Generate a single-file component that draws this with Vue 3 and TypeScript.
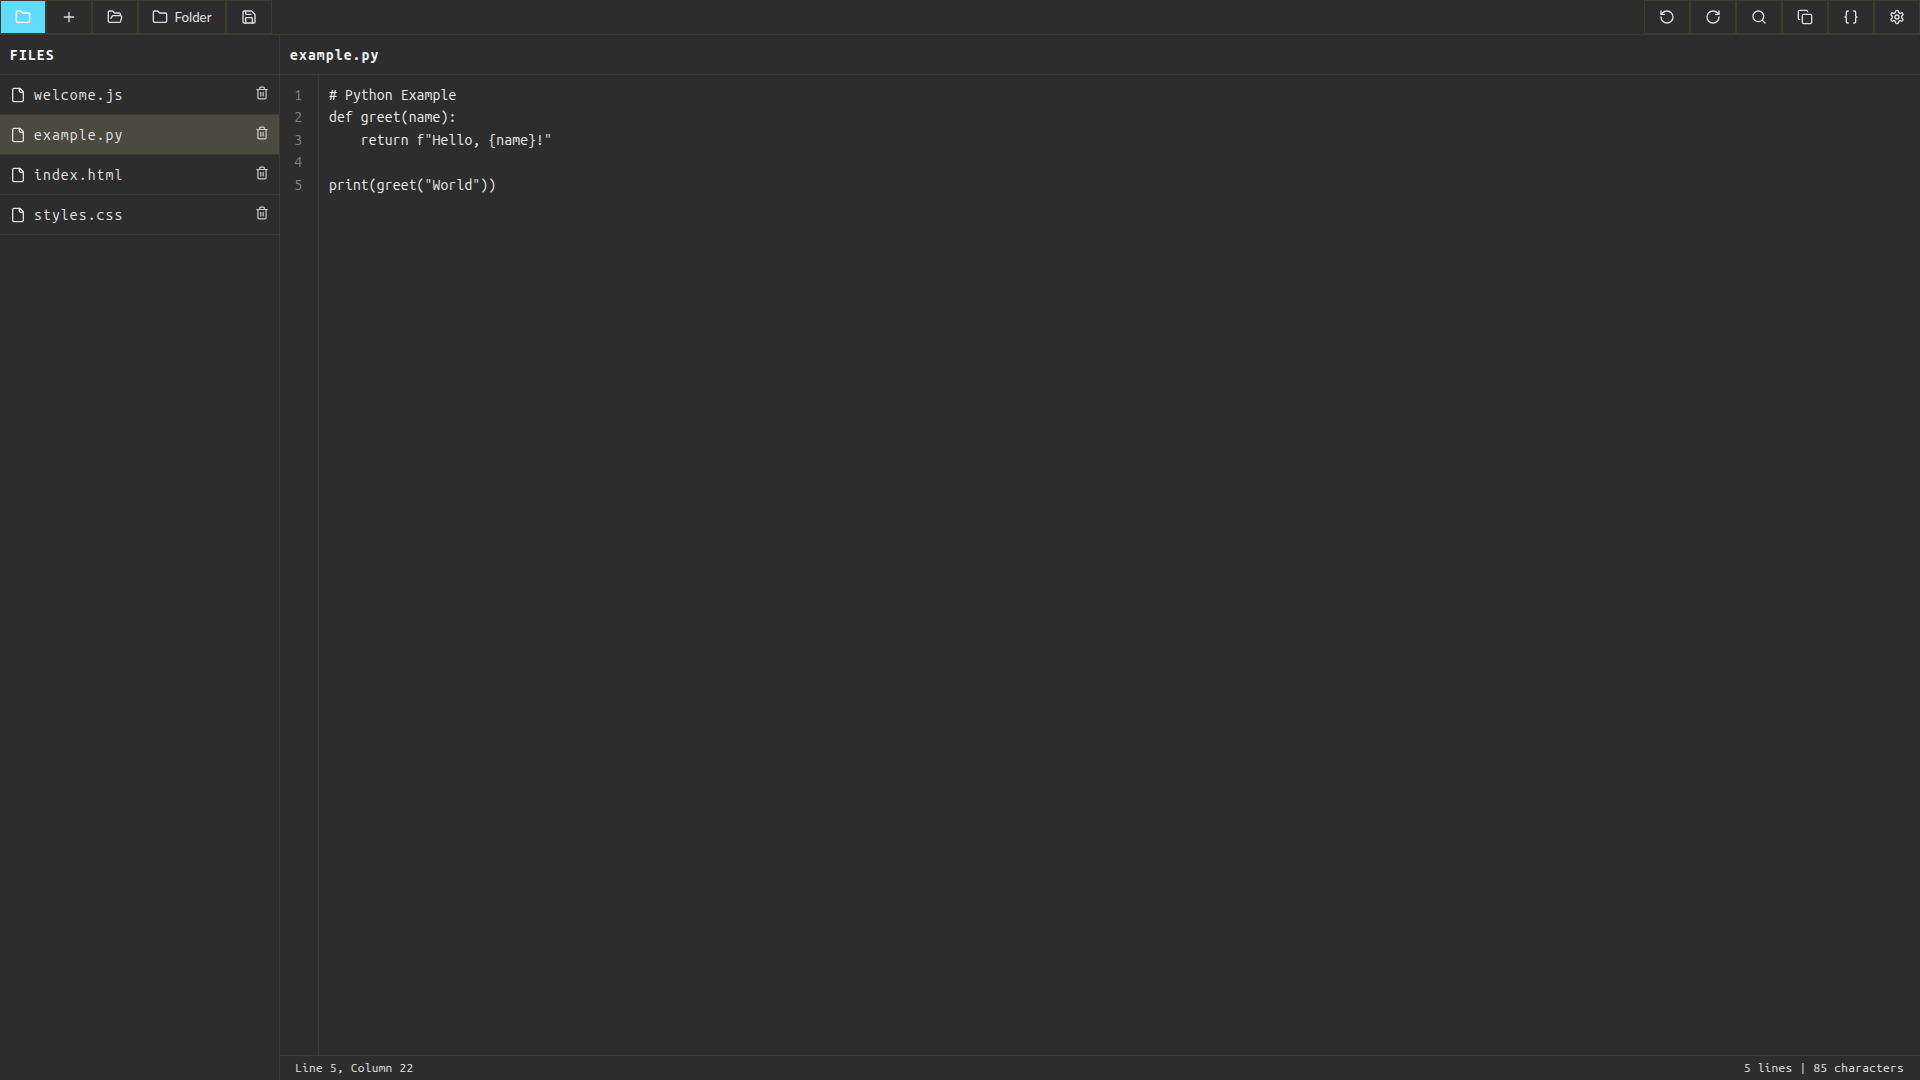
<script setup lang="ts">
const files = ['welcome.js', 'example.py', 'index.html', 'styles.css']
const lines = ['# Python Example', 'def greet(name):', '    return f"Hello, {name}!"', '', 'print(greet("World"))']
</script>

<template>
  <div class="app">
    <header class="toolbar">
      <div class="group">
        <button class="btn active"><svg viewBox="0 0 24 24"><path d="M20 20a2 2 0 0 0 2-2V8a2 2 0 0 0-2-2h-7.9a2 2 0 0 1-1.69-.9L9.6 3.9A2 2 0 0 0 7.93 3H4a2 2 0 0 0-2 2v13a2 2 0 0 0 2 2Z"/></svg></button>
        <button class="btn"><svg viewBox="0 0 24 24"><path d="M5 12h14M12 5v14"/></svg></button>
        <button class="btn"><svg viewBox="0 0 24 24"><path d="m6 14 1.5-2.9A2 2 0 0 1 9.24 10H20a2 2 0 0 1 1.94 2.5l-1.54 6a2 2 0 0 1-1.95 1.5H4a2 2 0 0 1-2-2V5a2 2 0 0 1 2-2h3.9a2 2 0 0 1 1.69.9l.81 1.2a2 2 0 0 0 1.67.9H18a2 2 0 0 1 2 2v2"/></svg></button>
        <button class="btn wide"><svg viewBox="0 0 24 24"><path d="M20 20a2 2 0 0 0 2-2V8a2 2 0 0 0-2-2h-7.9a2 2 0 0 1-1.69-.9L9.6 3.9A2 2 0 0 0 7.93 3H4a2 2 0 0 0-2 2v13a2 2 0 0 0 2 2Z"/></svg><span>Folder</span></button>
        <button class="btn"><svg viewBox="0 0 24 24"><path d="M15.2 3a2 2 0 0 1 1.4.6l3.8 3.8a2 2 0 0 1 .6 1.4V19a2 2 0 0 1-2 2H5a2 2 0 0 1-2-2V5a2 2 0 0 1 2-2z"/><path d="M17 21v-7a1 1 0 0 0-1-1H8a1 1 0 0 0-1 1v7"/><path d="M7 3v4a1 1 0 0 0 1 1h7"/></svg></button>
      </div>
      <div class="group">
        <button class="btn"><svg viewBox="0 0 24 24"><path d="M3 12a9 9 0 1 0 9-9 9.75 9.75 0 0 0-6.74 2.74L3 8"/><path d="M3 3v5h5"/></svg></button>
        <button class="btn"><svg viewBox="0 0 24 24"><path d="M21 12a9 9 0 1 1-9-9c2.52 0 4.93 1 6.74 2.74L21 8"/><path d="M21 3v5h-5"/></svg></button>
        <button class="btn"><svg viewBox="0 0 24 24"><circle cx="11" cy="11" r="8"/><path d="m21 21-4.3-4.3"/></svg></button>
        <button class="btn"><svg viewBox="0 0 24 24"><rect x="8" y="8" width="14" height="14" rx="2"/><path d="M4 16c-1.1 0-2-.9-2-2V4c0-1.1.9-2 2-2h10c1.1 0 2 .9 2 2"/></svg></button>
        <button class="btn"><svg viewBox="0 0 24 24"><path d="M8 3H7a2 2 0 0 0-2 2v5a2 2 0 0 1-2 2 2 2 0 0 1 2 2v5c0 1.1.9 2 2 2h1"/><path d="M16 21h1a2 2 0 0 0 2-2v-5c0-1.1.9-2 2-2a2 2 0 0 1-2-2V5a2 2 0 0 0-2-2h-1"/></svg></button>
        <button class="btn"><svg viewBox="0 0 24 24"><path d="M12.22 2h-.44a2 2 0 0 0-2 2v.18a2 2 0 0 1-1 1.73l-.43.25a2 2 0 0 1-2 0l-.15-.08a2 2 0 0 0-2.73.73l-.22.38a2 2 0 0 0 .73 2.73l.15.1a2 2 0 0 1 1 1.72v.51a2 2 0 0 1-1 1.74l-.15.09a2 2 0 0 0-.73 2.73l.22.38a2 2 0 0 0 2.73.73l.15-.08a2 2 0 0 1 2 0l.43.25a2 2 0 0 1 1 1.73V20a2 2 0 0 0 2 2h.44a2 2 0 0 0 2-2v-.18a2 2 0 0 1 1-1.73l.43-.25a2 2 0 0 1 2 0l.15.08a2 2 0 0 0 2.73-.73l.22-.39a2 2 0 0 0-.73-2.73l-.15-.08a2 2 0 0 1-1-1.74v-.5a2 2 0 0 1 1-1.74l.15-.09a2 2 0 0 0 .73-2.73l-.22-.38a2 2 0 0 0-2.73-.73l-.15.08a2 2 0 0 1-2 0l-.43-.25a2 2 0 0 1-1-1.73V4a2 2 0 0 0-2-2z"/><circle cx="12" cy="12" r="3"/></svg></button>
      </div>
    </header>
    <div class="body">
      <aside class="sidebar">
        <div class="side-head">FILES</div>
        <div v-for="f in files" :key="f" class="file" :class="{ selected: f === 'example.py' }">
          <svg class="doc" viewBox="0 0 24 24"><path d="M15 2H6a2 2 0 0 0-2 2v16a2 2 0 0 0 2 2h12a2 2 0 0 0 2-2V7Z"/><path d="M14 2v4a2 2 0 0 0 2 2h4"/></svg>
          <span class="name">{{ f }}</span>
          <svg class="trash" viewBox="0 0 24 24"><path d="M3 6h18M19 6v14c0 1-1 2-2 2H7c-1 0-2-1-2-2V6M8 6V4c0-1 1-2 2-2h4c1 0 2 1 2 2v2M10 11v6M14 11v6"/></svg>
        </div>
      </aside>
      <main class="main">
        <div class="tab">example.py</div>
        <div class="editor">
          <div class="gutter"><div v-for="(_, i) in lines" :key="i">{{ i + 1 }}</div></div>
          <div class="code"><div v-for="(l, i) in lines" :key="i" class="line">{{ l }}</div></div>
        </div>
        <footer class="status"><span>Line 5, Column 22</span><span>5 lines | 85 characters</span></footer>
      </main>
    </div>
  </div>
</template>

<style>
html, body { margin: 0; background: #2d2d2d; }
</style>

<style scoped>
.app { width: 1920px; height: 1080px; display: flex; flex-direction: column; background: #2d2d2d; color: #f0f0f0; font-family: "Ubuntu Mono", "DejaVu Sans Mono", monospace; overflow: hidden; }
.toolbar { height: 35px; box-sizing: border-box; display: flex; justify-content: space-between; border-bottom: 1px solid #3b3b2e; flex: none; }
.group { display: flex; }
.btn { width: 46px; height: 34px; box-sizing: border-box; padding: 0; border: 1px solid #3b3b2e; background: #2d2d2d; color: #e0e0e0; display: flex; align-items: center; justify-content: center; gap: 6px; font-family: Lato, sans-serif; font-size: 13.33px; }
.btn.active { background: #61dafb; color: #fff; }
.btn.wide { width: 88px; }
.btn svg { width: 16px; height: 16px; }
svg { fill: none; stroke: currentColor; stroke-width: 2; stroke-linecap: round; stroke-linejoin: round; flex: none; }
.body { flex: 1; display: flex; min-height: 0; }
.sidebar { width: 280px; box-sizing: border-box; border-right: 1px solid #3b3b2e; flex: none; }
.side-head { height: 40px; box-sizing: border-box; border-bottom: 1px solid #3b3b2e; padding: 0 0 0 10px; display: flex; align-items: center; font-size: 14px; font-weight: 700; letter-spacing: 1.1px; color: #f5f5f5; }
.file { height: 40px; box-sizing: border-box; border-bottom: 1px solid #3b3b2e; display: flex; align-items: center; padding: 0 10px 0 10px; color: #e6e6e6; }
.file.selected { background: #4a4a3f; }
.doc { width: 16px; height: 16px; color: #e0e0e0; }
.name { flex: 1; margin-left: 8px; font-size: 14px; letter-spacing: 1.1px; }
.trash { width: 14px; height: 16px; margin-top: -3px; color: #d0d0d0; }
.main { flex: 1; display: flex; flex-direction: column; min-width: 0; }
.tab { height: 40px; box-sizing: border-box; border-bottom: 1px solid #3b3b2e; padding: 0 0 0 10px; display: flex; align-items: center; font-size: 14px; letter-spacing: 1.1px; font-weight: 700; }
.editor { flex: 1; display: flex; min-height: 0; }
.gutter { width: 39px; box-sizing: border-box; border-right: 1px solid #3b3b2e; padding: 9px 16px 0 0; text-align: right; font-size: 14px; line-height: 22.4px; color: #858585; flex: none; }
.code { padding: 9px 0 0 10px; font-size: 14px; letter-spacing: 0.125px; line-height: 22.4px; color: #f0f0f0; white-space: pre; }
.line { min-height: 22.4px; }
.status { height: 25px; box-sizing: border-box; border-top: 1px solid #3b3b2e; padding: 0 16px 2px 15px; display: flex; align-items: center; justify-content: space-between; font-size: 12px; letter-spacing: 0.25px; color: #e6e6e6; flex: none; }
</style>
